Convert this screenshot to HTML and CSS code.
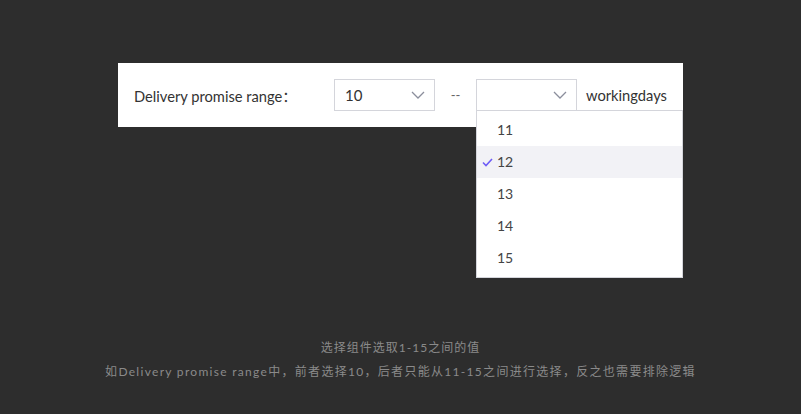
FILE: index.html
```html
<!DOCTYPE html>
<html>
<head>
<meta charset="utf-8">
<link rel="stylesheet" href="styles.css">
</head>
<body>
<div class="stage">
  <div class="panel">
    <span class="label">Delivery promise range：</span>
    <div class="select sel-a">
      <span class="val">10</span>
      <svg class="chev" width="14" height="8" viewBox="0 0 14 8"><path d="M1 1 L7 7 L13 1" fill="none" stroke="#8b8e9c" stroke-width="1.3"/></svg>
    </div>
    <span class="dash">--</span>
    <div class="select sel-b">
      <span class="val"></span>
      <svg class="chev" width="14" height="8" viewBox="0 0 14 8"><path d="M1 1 L7 7 L13 1" fill="none" stroke="#8b8e9c" stroke-width="1.3"/></svg>
      <ul class="menu">
        <li class="item">11</li>
        <li class="item active"><svg class="check" width="11" height="9" viewBox="0 0 11 9"><path d="M1 4.5 L4 7.5 L10 1" fill="none" stroke="#6e5cf6" stroke-width="1.6"/></svg>12</li>
        <li class="item">13</li>
        <li class="item">14</li>
        <li class="item">15</li>
      </ul>
    </div>
    <span class="unit">workingdays</span>
  </div>
  <div class="notes">
    <p class="note">选择组件选取1-15之间的值</p>
    <p class="note wide">如Delivery promise range中，前者选择10，后者只能从11-15之间进行选择，反之也需要排除逻辑</p>
  </div>
</div>
</body>
</html>
```
FILE: styles.css
```css
html, body {
  margin: 0;
  padding: 0;
  background: #2d2d2d;
  width: 801px;
  height: 414px;
  overflow: hidden;
  font-family: Lato, "Noto Sans CJK SC", sans-serif;
}
.stage {
  padding-top: 63px;
}
.panel {
  margin-left: 118px;
  width: 565px;
  height: 64px;
  background: #fff;
  box-sizing: border-box;
  padding-left: 16px;
  display: flex;
  align-items: center;
}
.label {
  width: 200px;
  font-size: 14.7px;
  color: #333;
}
.select {
  position: relative;
  box-sizing: border-box;
  height: 32px;
  border: 1px solid #d4d5db;
  display: flex;
  align-items: center;
  justify-content: space-between;
  padding: 0 9px 0 10px;
  font-size: 15px;
  color: #333;
}
.sel-a { width: 101px; }
.sel-b { width: 101px; }
.chev { display: block; }
.dash {
  width: 41px;
  text-align: center;
  font-size: 13px;
  color: #666;
}
.unit {
  margin-left: 9px;
  font-size: 14.7px;
  color: #333;
}
.menu {
  position: absolute;
  left: -1px;
  top: 30px;
  width: 207px;
  box-sizing: border-box;
  margin: 0;
  padding: 3px 0 3px;
  list-style: none;
  background: #fff;
  border: 1px solid #d4d5db;
  z-index: 2;
}
.item {
  height: 32px;
  box-sizing: border-box;
  padding-bottom: 2px;
  display: flex;
  align-items: center;
  padding-left: 20px;
  font-size: 14px;
  color: #444;
  position: relative;
}
.item.active {
  background: #f2f2f6;
}
.check {
  position: absolute;
  left: 5px;
  top: 12px;
}
.notes {
  margin-top: 213px;
  text-align: center;
}
.note {
  margin: 0 0 8px;
  font-size: 12px;
  line-height: 16px;
  color: #8a8a8a;
  letter-spacing: 1px;
}
.note.wide {
  letter-spacing: 1.3px;
}
```
